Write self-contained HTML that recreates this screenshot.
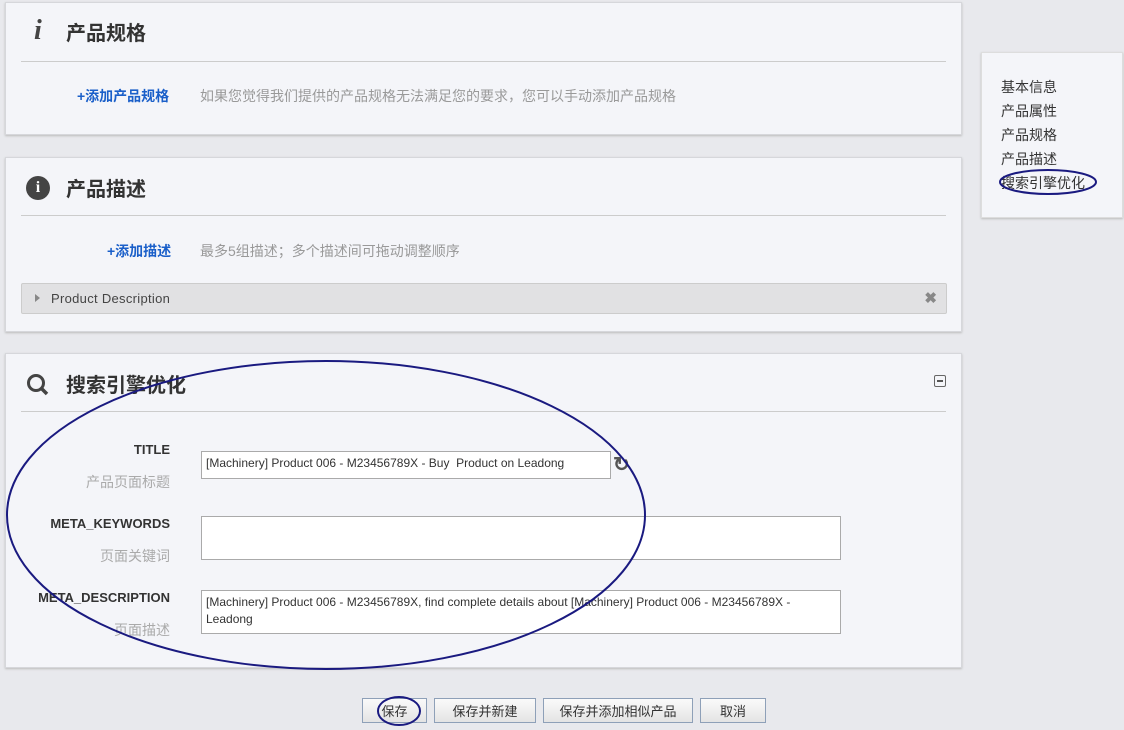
<!DOCTYPE html><html><head><meta charset="utf-8"><style>
body{margin:0;width:1124px;height:730px;background:#e8e9ed;font-family:"Liberation Sans","Noto Sans CJK SC",sans-serif;position:relative;overflow:hidden}
.p{position:absolute;left:5px;width:955px;background:#f4f5f9;border:1px solid #d6d7db;box-shadow:0 1px 2px #bbb}
.h{position:absolute;left:60px;font-size:20px;font-weight:bold;color:#333}
.hr{position:absolute;left:15px;width:925px;border-top:1px solid #ccc}
.a{position:absolute;color:#1a5fc9;font-weight:bold;font-size:14px}
.g{position:absolute;color:#999;font-size:14px}
.lb{position:absolute;right:791px;text-align:right;font-size:13px;font-weight:bold;color:#333}
.sl{position:absolute;right:791px;text-align:right;font-size:14px;color:#aaa}
.in{position:absolute;left:195px;background:#fff;border:1px solid #aaa;font-size:12px;color:#333;padding:3px 4px;box-sizing:border-box;line-height:17px}
.btn{position:absolute;top:698px;height:25px;border:1px solid #8ea0b8;background:linear-gradient(#fafafa,#e4e4e4);font-size:13px;color:#333;text-align:center;line-height:25px;box-sizing:border-box}
</style></head><body>
<div class="p" style="top:2px;height:131px">
<div style="position:absolute;left:28px;top:12px;font:italic bold 28px 'Liberation Serif',serif;color:#444">i</div>
<div class="h" style="top:14px">产品规格</div>
<div class="hr" style="top:58px"></div>
<div class="a" style="left:71px;top:83px">+添加产品规格</div>
<div class="g" style="left:194px;top:83px">如果您觉得我们提供的产品规格无法满足您的要求，您可以手动添加产品规格</div>
</div>
<div class="p" style="top:157px;height:173px">
<div style="position:absolute;left:20px;top:18px;width:24px;height:24px;border-radius:50%;background:#444;color:#fff;font:bold 16px 'Liberation Serif',serif;text-align:center;line-height:24px">i</div>
<div class="h" style="top:15px">产品描述</div>
<div class="hr" style="top:57px"></div>
<div class="a" style="left:101px;top:83px">+添加描述</div>
<div class="g" style="left:194px;top:83px">最多5组描述；多个描述间可拖动调整顺序</div>
<div style="position:absolute;left:15px;top:125px;width:924px;height:29px;background:#e1e1e3;border:1px solid #ccc;border-radius:2px">
<div style="position:absolute;left:13px;top:10px;border-left:5px solid #888;border-top:4px solid transparent;border-bottom:4px solid transparent"></div>
<div style="position:absolute;left:29px;top:7px;font-size:13px;color:#444;letter-spacing:.3px">Product Description</div>
<div style="position:absolute;right:9px;top:5px;font-size:15px;font-weight:bold;color:#888">✖</div>
</div></div>
<div class="p" style="top:353px;height:313px">
<svg style="position:absolute;left:20px;top:19px" width="24" height="24"><circle cx="10" cy="10" r="7.5" fill="none" stroke="#444" stroke-width="3"/><line x1="15" y1="15" x2="21" y2="21" stroke="#444" stroke-width="3.5"/></svg>
<div class="h" style="top:15px">搜索引擎优化</div>
<div style="position:absolute;left:928px;top:21px;width:10px;height:10px;border:1px solid #666;border-radius:2px"><div style="margin:4px 2px;height:2px;background:#555"></div></div>
<div class="hr" style="top:57px"></div>
<div class="lb" style="top:88px">TITLE</div>
<div class="sl" style="top:118px">产品页面标题</div>
<div class="in" style="top:97px;width:410px;height:28px">[Machinery] Product 006 - M23456789X - Buy&nbsp; Product on Leadong</div>
<div style="position:absolute;left:607px;top:98px;font-size:20px;font-weight:bold;color:#555">↻</div>
<div class="lb" style="top:162px">META_KEYWORDS</div>
<div class="sl" style="top:192px">页面关键词</div>
<div class="in" style="top:162px;width:640px;height:44px"></div>
<div class="lb" style="top:236px">META_DESCRIPTION</div>
<div class="sl" style="top:266px">页面描述</div>
<div class="in" style="top:236px;width:640px;height:44px">[Machinery] Product 006 - M23456789X, find complete details about [Machinery] Product 006 - M23456789X - Leadong</div>
</div>
<div style="position:absolute;left:981px;top:52px;width:140px;height:164px;background:#f4f5f9;border:1px solid #ddd;box-shadow:0 1px 2px #bbb;font-size:14px;color:#333;line-height:24px">
<div style="position:absolute;left:19px;top:22px">基本信息<br>产品属性<br>产品规格<br>产品描述<br>搜索引擎优化</div></div>
<div class="btn" style="left:362px;width:65px">保存</div>
<div class="btn" style="left:434px;width:102px">保存并新建</div>
<div class="btn" style="left:543px;width:150px">保存并添加相似产品</div>
<div class="btn" style="left:700px;width:66px">取消</div>
<svg style="position:absolute;left:0;top:0" width="1124" height="730"><g fill="none" stroke="#1a1a80" stroke-width="2">
<ellipse cx="326" cy="515" rx="319" ry="154"/>
<ellipse cx="1048" cy="182" rx="48" ry="12"/>
<ellipse cx="399" cy="711" rx="21" ry="14"/></g></svg>
</body></html>
